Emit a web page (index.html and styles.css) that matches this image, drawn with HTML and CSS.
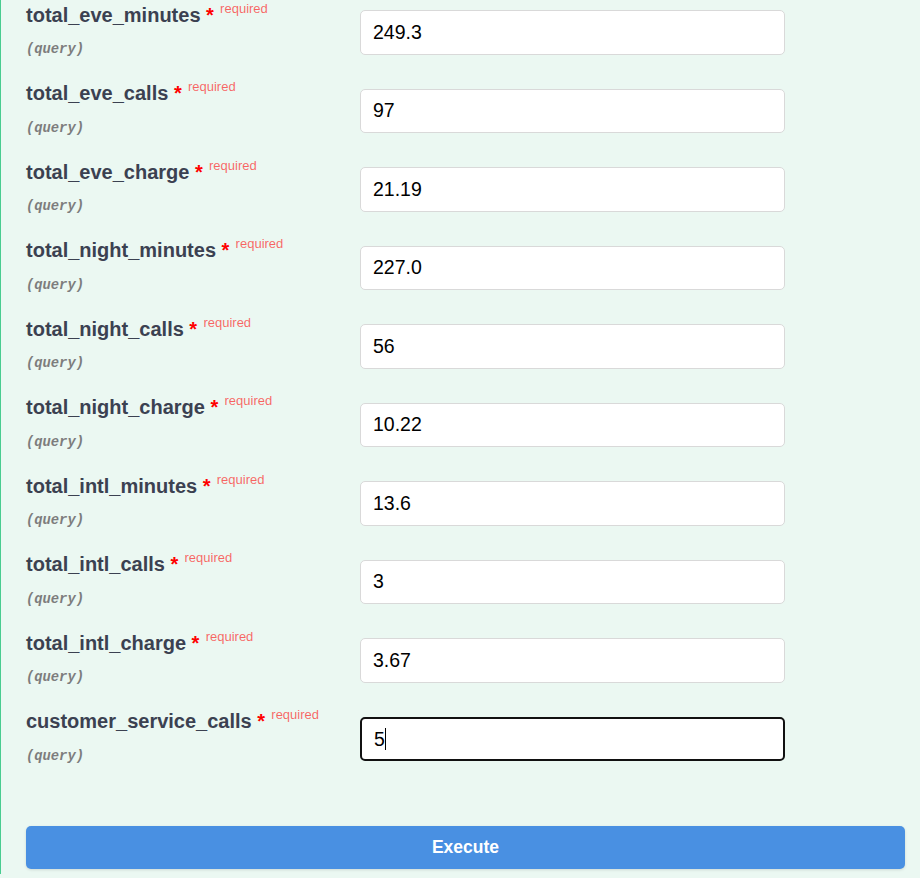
FILE: index.html
```html
<!DOCTYPE html>
<html>
<head>
<meta charset="utf-8">
<link rel="stylesheet" href="styles.css">
</head>
<body>
<div class="topbar"></div>
<div class="opblock">
  <div class="params">
    <div class="row">
      <div class="name-col">
        <div class="pname">total_eve_minutes<span class="star">&nbsp;*</span><span class="req">required</span></div>
        <div class="pin">(query)</div>
      </div>
      <div class="val-col"><input class="field" type="text" value="249.3"></div>
    </div>
    <div class="row">
      <div class="name-col">
        <div class="pname">total_eve_calls<span class="star">&nbsp;*</span><span class="req">required</span></div>
        <div class="pin">(query)</div>
      </div>
      <div class="val-col"><input class="field" type="text" value="97"></div>
    </div>
    <div class="row">
      <div class="name-col">
        <div class="pname">total_eve_charge<span class="star">&nbsp;*</span><span class="req">required</span></div>
        <div class="pin">(query)</div>
      </div>
      <div class="val-col"><input class="field" type="text" value="21.19"></div>
    </div>
    <div class="row">
      <div class="name-col">
        <div class="pname">total_night_minutes<span class="star">&nbsp;*</span><span class="req">required</span></div>
        <div class="pin">(query)</div>
      </div>
      <div class="val-col"><input class="field" type="text" value="227.0"></div>
    </div>
    <div class="row">
      <div class="name-col">
        <div class="pname">total_night_calls<span class="star">&nbsp;*</span><span class="req">required</span></div>
        <div class="pin">(query)</div>
      </div>
      <div class="val-col"><input class="field" type="text" value="56"></div>
    </div>
    <div class="row">
      <div class="name-col">
        <div class="pname">total_night_charge<span class="star">&nbsp;*</span><span class="req">required</span></div>
        <div class="pin">(query)</div>
      </div>
      <div class="val-col"><input class="field" type="text" value="10.22"></div>
    </div>
    <div class="row">
      <div class="name-col">
        <div class="pname">total_intl_minutes<span class="star">&nbsp;*</span><span class="req">required</span></div>
        <div class="pin">(query)</div>
      </div>
      <div class="val-col"><input class="field" type="text" value="13.6"></div>
    </div>
    <div class="row">
      <div class="name-col">
        <div class="pname">total_intl_calls<span class="star">&nbsp;*</span><span class="req">required</span></div>
        <div class="pin">(query)</div>
      </div>
      <div class="val-col"><input class="field" type="text" value="3"></div>
    </div>
    <div class="row">
      <div class="name-col">
        <div class="pname">total_intl_charge<span class="star">&nbsp;*</span><span class="req">required</span></div>
        <div class="pin">(query)</div>
      </div>
      <div class="val-col"><input class="field" type="text" value="3.67"></div>
    </div>
    <div class="row">
      <div class="name-col">
        <div class="pname">customer_service_calls<span class="star">&nbsp;*</span><span class="req">required</span></div>
        <div class="pin">(query)</div>
      </div>
      <div class="val-col"><div class="field focused">5<span class="caret"></span></div></div>
    </div>
  </div>
  <div class="execute-wrapper">
    <button class="btn-execute" type="button">Execute</button>
  </div>
</div>
</body>
</html>
```
FILE: styles.css
```css
html, body {
  margin: 0;
  padding: 0;
  height: 100%;
  overflow: hidden;
}
body {
  background: #ebf8f2;
  font-family: "Liberation Sans", Arial, sans-serif;
}
.topbar {
  height: 3px;
  background: #f7f7f7;
  border-bottom: 1px solid #c4c4c4;
}
.opblock {
  border-left: 1px solid #49cc90;
  background: #ebf8f2;
  height: 874px;
  box-sizing: border-box;
  padding: 0 15px 0 25px;
}
.params {
  margin-top: -4px;
  display: flex;
  flex-direction: column;
}
.row {
  display: grid;
  grid-template-columns: 334px 425px;
  height: 78.5px;
}
.name-col {
  padding-top: 2.8px;
}
.pname {
  font-size: 20px;
  line-height: 24px;
  font-weight: 700;
  color: #3b4151;
  white-space: nowrap;
}
.star {
  color: #ff0000;
}
.req {
  position: relative;
  top: -9px;
  padding-left: 6.25px;
  font-size: 13px;
  font-weight: 400;
  color: rgba(255, 0, 0, 0.6);
}
.pin {
  margin-top: 12.5px;
  font-family: "Liberation Mono", monospace;
  font-size: 13.8px;
  line-height: 16px;
  font-weight: 700;
  font-style: italic;
  color: #7d7d7d;
}
.val-col {
  padding-top: 10px;
}
.field {
  display: block;
  box-sizing: border-box;
  width: 425px;
  height: 44.5px;
  margin: 0;
  padding: 0 12px;
  border: 1px solid #d9d9d9;
  border-radius: 5px;
  background: #ffffff;
  font-family: "Liberation Sans", Arial, sans-serif;
  font-size: 19.5px;
  color: #000000;
  outline: none;
}
.field.focused {
  border: 2px solid #111111;
  padding-left: 12px;
  line-height: 40.5px;
}
.caret {
  display: inline-block;
  width: 1px;
  height: 22px;
  background: #000;
  vertical-align: -4px;
}
.execute-wrapper {
  padding-top: 41px;
}
.btn-execute {
  display: block;
  width: 100%;
  height: 43px;
  border: none;
  border-radius: 5px;
  background: #4990e2;
  color: #ffffff;
  font-family: "Liberation Sans", Arial, sans-serif;
  font-size: 17.5px;
  font-weight: 700;
  box-shadow: 0 1px 3px rgba(0, 0, 0, 0.12);
  cursor: pointer;
}
```
